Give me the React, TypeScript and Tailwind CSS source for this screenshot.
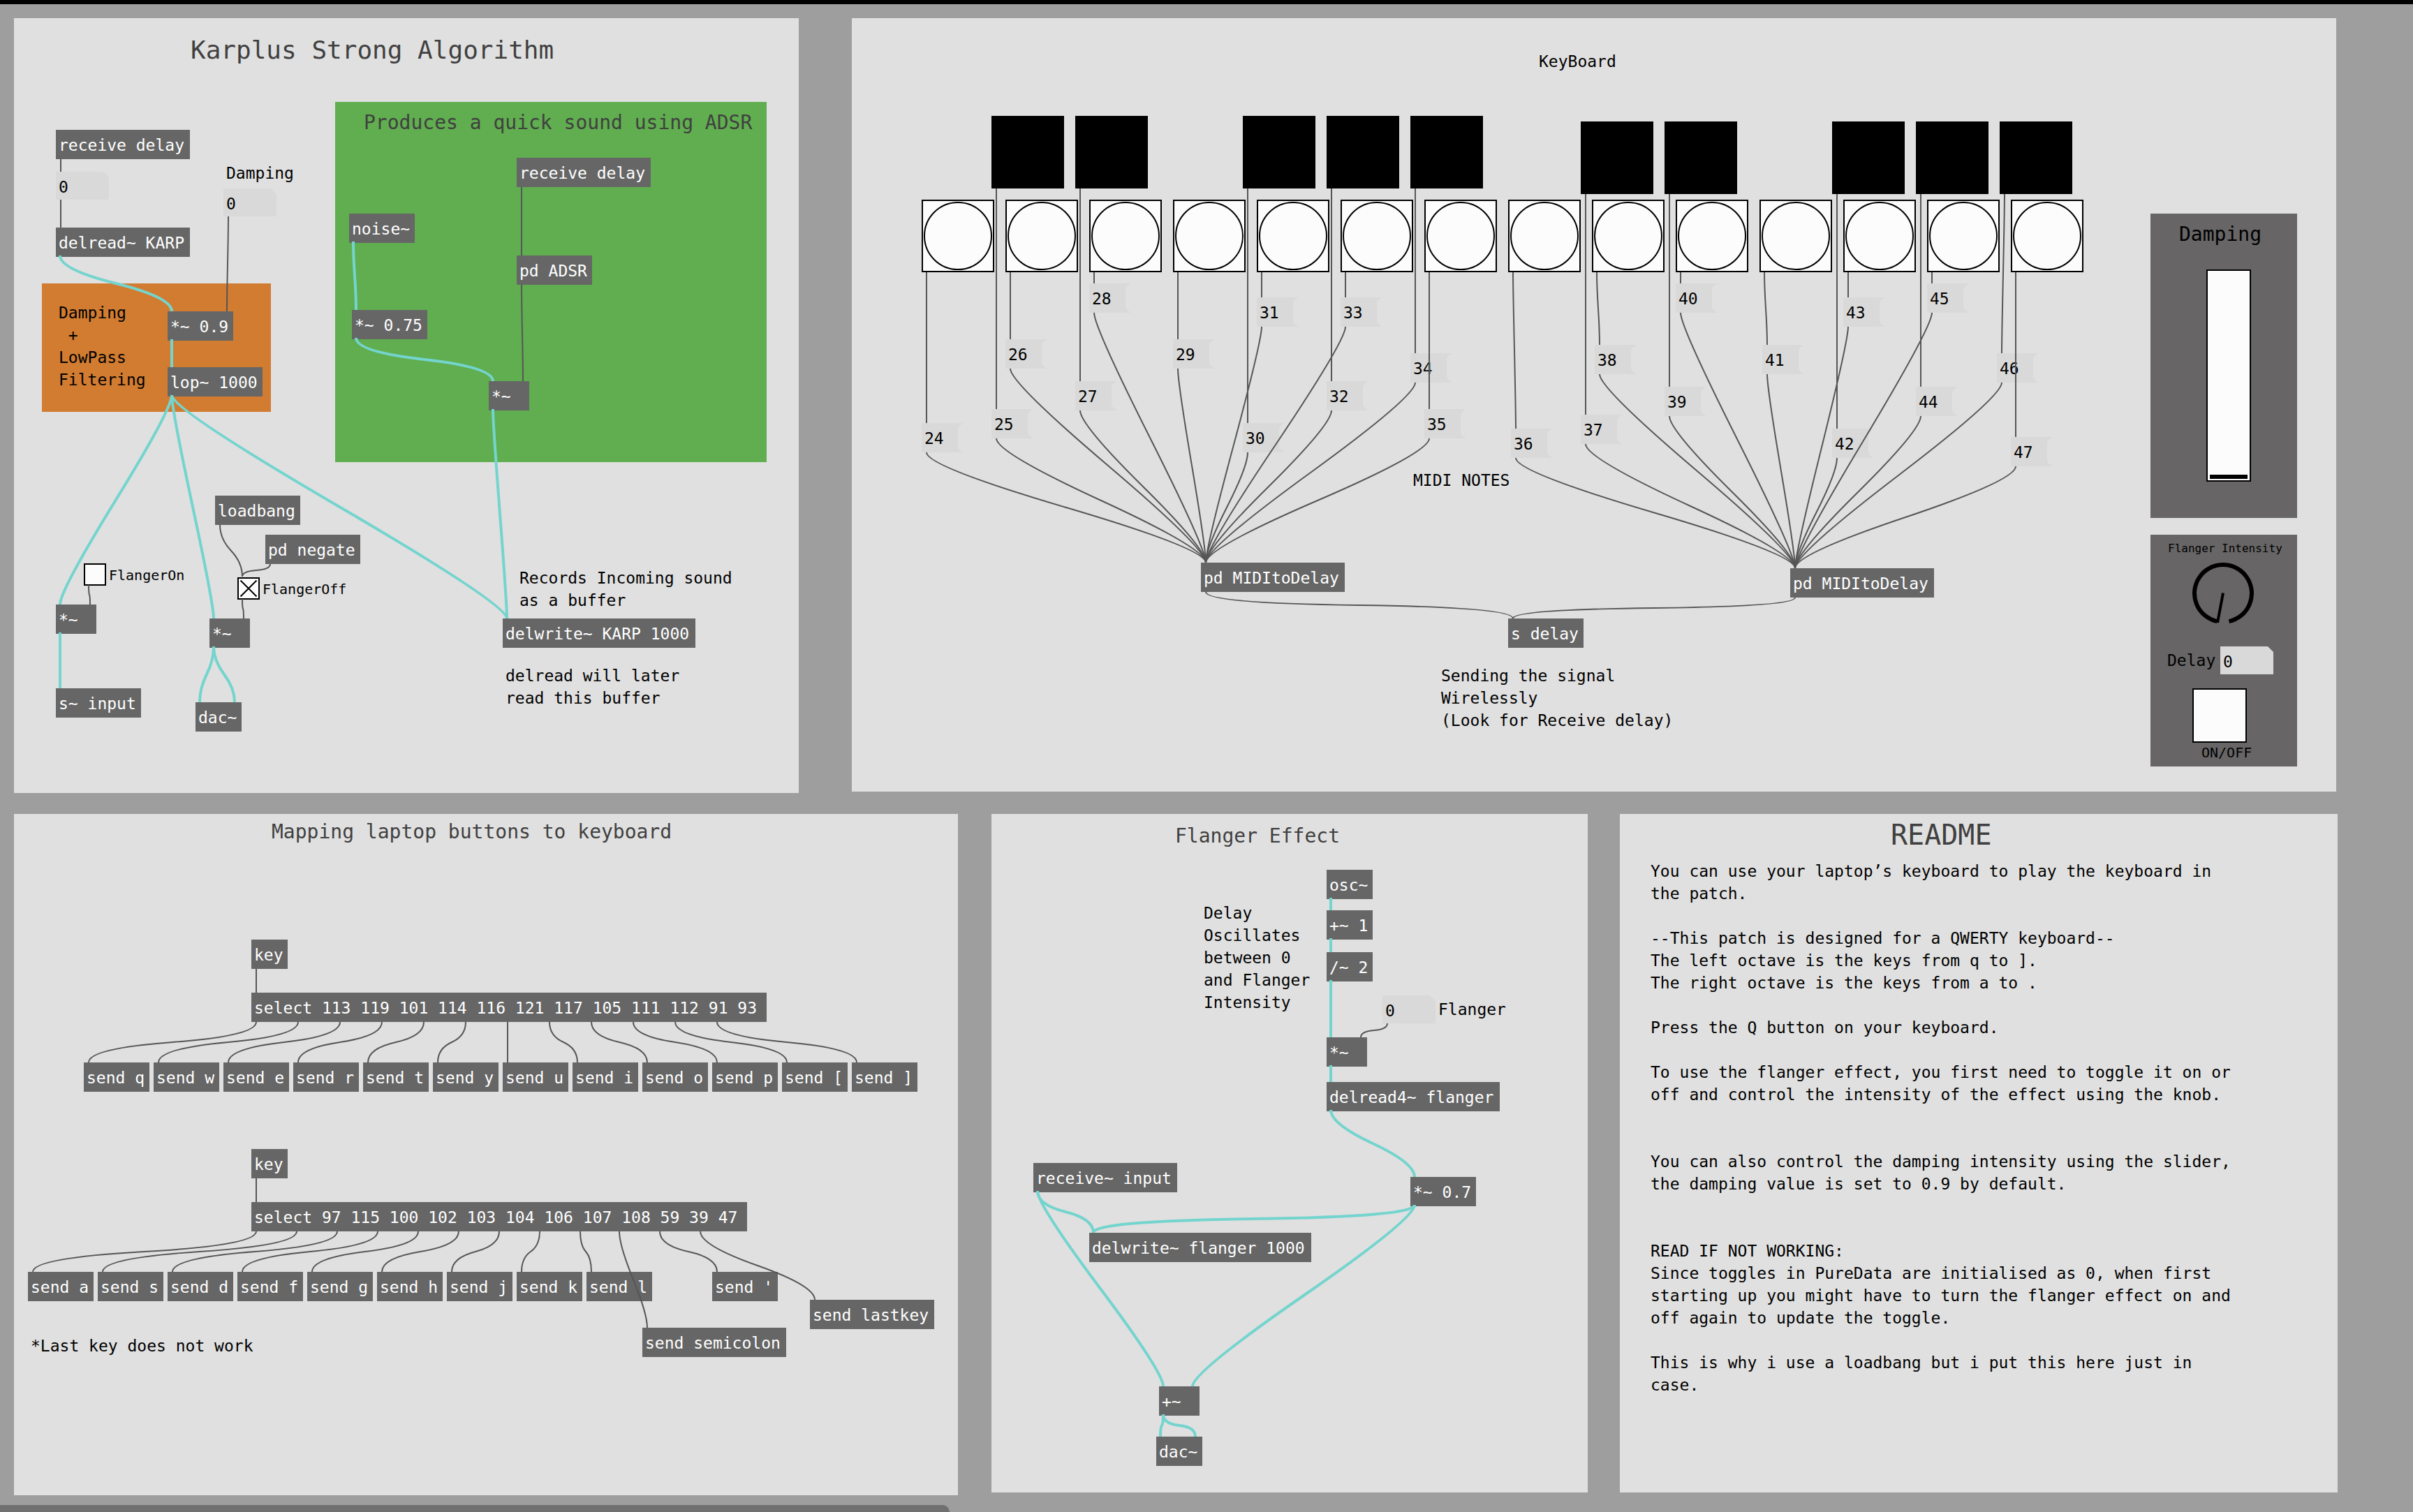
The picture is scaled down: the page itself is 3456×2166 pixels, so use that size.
import React from 'react';

type Point = { x: number; y: number };
type Wire = [x1: number, y1: number, x2: number, y2: number];
type Obj = [x: number, y: number, text: string, minWidth?: number];

/* Each patch canvas keeps the coordinates of the whole patch; the origin is its top left corner. */
const OriginContext = React.createContext<Point>({ x: 0, y: 0 });

function At({ x, y, children }: { x: number; y: number; children: React.ReactNode }) {
  const origin = React.useContext(OriginContext);
  return (
    <div className="absolute" style={{ left: x - origin.x, top: y - origin.y }}>
      {children}
    </div>
  );
}

/* Patch cord: two quadratic halves that leave and arrive vertically. */
function cordPath([x1, y1, x2, y2]: Wire) {
  if (x1 === x2) return `M${x1} ${y1}V${y2}`;
  const half = (y2 - y1) / 2;
  const lead = Math.min(20, half * 0.85);
  return `M${x1} ${y1}Q${x1} ${y1 + lead} ${(x1 + x2) / 2} ${y1 + half}Q${x2} ${y2 - lead} ${x2} ${y2}`;
}

function Wires({ control = [], signal = [] }: { control?: Wire[]; signal?: Wire[] }) {
  const origin = React.useContext(OriginContext);
  return (
    <svg className="pointer-events-none absolute inset-0 h-full w-full overflow-visible" fill="none" aria-hidden="true">
      <g transform={`translate(${-origin.x} ${-origin.y})`}>
        {control.map((w) => (
          <path key={w.join()} d={cordPath(w)} stroke="#565656" strokeWidth="2" />
        ))}
        {signal.map((w) => (
          <path key={w.join()} d={cordPath(w)} stroke="#74d4ce" strokeWidth="4" />
        ))}
      </g>
    </svg>
  );
}

function ObjectBox({ text, minWidth }: { text: string; minWidth?: number }) {
  return (
    <div
      className="bg-[#666666] pt-[6px] pb-1 pl-1 leading-8 whitespace-pre text-white"
      style={{ width: minWidth ?? text.length * 14 + 10 }}
    >
      {text}
    </div>
  );
}

function Objects({ items }: { items: Obj[] }) {
  return (
    <>
      {items.map(([x, y, text, minWidth]) => (
        <At key={`${x}-${y}`} x={x} y={y}>
          <ObjectBox text={text} minWidth={minWidth} />
        </At>
      ))}
    </>
  );
}

function SendRow({ keys }: { keys: string[] }) {
  return (
    <div className="flex gap-[6px]">
      {keys.map((key) => (
        <ObjectBox key={key} text={`send ${key}`} />
      ))}
    </div>
  );
}

function Comment({ x, y, children }: { x: number; y: number; children: React.ReactNode }) {
  return (
    <At x={x} y={y}>
      <p className="leading-8 whitespace-pre">{children}</p>
    </At>
  );
}

function NumberBox({ label, id }: { label: string; id?: string }) {
  return (
    <input
      id={id}
      aria-label={id ? undefined : label}
      defaultValue="0"
      inputMode="numeric"
      className="block h-10 w-[76px] bg-[#d9d9d9] pt-1 pl-1 leading-8 [clip-path:polygon(0_0,68px_0,100%_8px,100%_100%,0_100%)]"
    />
  );
}

function Toggle({ label, checked = false }: { label: string; checked?: boolean }) {
  return (
    <label className="flex items-center gap-1 text-xl leading-8">
      <span className="grid h-8 w-8">
        <input
          type="checkbox"
          defaultChecked={checked}
          className="peer col-start-1 row-start-1 block h-8 w-8 appearance-none border-2 border-black bg-[#fcfcfc]"
        />
        <svg
          className="pointer-events-none z-10 col-start-1 row-start-1 hidden h-8 w-8 peer-checked:block"
          viewBox="0 0 32 32"
          stroke="#000"
          strokeWidth="2"
        >
          <path d="M4.500 4.500L27.500 27.500M27.500 4.500L4.500 27.500" />
        </svg>
      </span>
      <span className="pt-0.5">{label}</span>
    </label>
  );
}

function BlackKeys({ count }: { count: number }) {
  return (
    <div className="flex gap-4">
      {Array.from({ length: count }, (_, i) => (
        <button key={i} type="button" aria-label={`Black key ${i + 1}`} className="h-[104px] w-[104px] bg-black" />
      ))}
    </div>
  );
}

function WhiteKeys() {
  return (
    <div className="flex gap-4">
      {Array.from({ length: 14 }, (_, i) => (
        <button
          key={i}
          type="button"
          aria-label={`White key ${i + 1}`}
          className="h-[104px] w-[104px] border-2 border-black bg-[#fcfcfc] p-px"
        >
          <span className="block h-full w-full rounded-full border-2 border-black" />
        </button>
      ))}
    </div>
  );
}

function Message({ note }: { note: number }) {
  return (
    <button
      type="button"
      className="block h-[42px] w-[60px] bg-[#d9d9d9] pt-px pl-1 text-left leading-8 [clip-path:polygon(0_0,100%_0,54px_4px,52px_8px,52px_34px,54px_38px,100%_100%,0_100%)]"
    >
      {note}
    </button>
  );
}

/* ---------- Karplus Strong ---------- */

const karplusObjects: Obj[] = [
  [80, 186, 'receive delay'],
  [80, 326, 'delread~ KARP'],
  [240, 446, '*~ 0.9'],
  [240, 526, 'lop~ 1000'],
  [740, 226, 'receive delay'],
  [740, 366, 'pd ADSR'],
  [500, 306, 'noise~'],
  [504, 444, '*~ 0.75'],
  [700, 546, '*~', 58],
  [308, 710, 'loadbang'],
  [380, 766, 'pd negate'],
  [80, 866, '*~', 58],
  [300, 886, '*~', 58],
  [80, 986, 's~ input'],
  [280, 1006, 'dac~'],
  [720, 886, 'delwrite~ KARP 1000'],
];

const karplusControl: Wire[] = [
  [87, 228, 87, 246],
  [87, 286, 87, 326],
  [327, 310, 325, 446],
  [747, 268, 747, 366],
  [747, 408, 749, 546],
  [315, 752, 347, 826],
  [387, 808, 347, 826],
  [127, 838, 129, 866],
  [347, 858, 349, 886],
];

const karplusSignal: Wire[] = [
  [86, 366, 246, 446],
  [246, 486, 246, 526],
  [246, 566, 86, 866],
  [246, 566, 306, 886],
  [246, 566, 726, 886],
  [86, 906, 86, 986],
  [306, 926, 286, 1006],
  [306, 926, 336, 1006],
  [506, 346, 510, 444],
  [510, 484, 706, 546],
  [706, 586, 726, 886],
];

function KarplusPanel() {
  return (
    <OriginContext.Provider value={{ x: 20, y: 26 }}>
      <section className="relative min-h-[1110px] grow-[1124] basis-0 bg-[#e0e0e0]">
        <h1 className="ml-[253px] pt-[22px] text-4xl leading-12 text-[#404040]">Karplus Strong Algorithm</h1>
        <At x={60} y={406}>
          <p className="h-[184px] w-[328px] bg-[#d17c31] pt-[26px] pl-6 leading-8 whitespace-pre">
            {'Damping\n +\nLowPass\nFiltering'}
          </p>
        </At>
        <At x={480} y={146}>
          <h2 className="h-[516px] w-[618px] bg-[#60ae4f] pt-3 pl-[41px] text-[28px] leading-9 text-[#404040]">
            Produces a quick sound using ADSR
          </h2>
        </At>
        <Objects items={karplusObjects} />
        <At x={80} y={246}>
          <NumberBox label="Delay value" />
        </At>
        <At x={320} y={270}>
          <NumberBox label="Damping" />
        </At>
        <Comment x={324} y={232}>Damping</Comment>
        <Comment x={744} y={812}>{'Records Incoming sound\nas a buffer'}</Comment>
        <Comment x={724} y={952}>{'delread will later\nread this buffer'}</Comment>
        <At x={120} y={806}>
          <Toggle label="FlangerOn" />
        </At>
        <At x={340} y={826}>
          <Toggle label="FlangerOff" checked />
        </At>
        <Wires control={karplusControl} signal={karplusSignal} />
      </section>
    </OriginContext.Provider>
  );
}

/* ---------- Keyboard ---------- */

/* note, message position, and the key that triggers it (left edge, bottom edge) */
const notes: [note: number, x: number, y: number, keyX: number, keyBottom: number][] = [
  [24, 1320, 606, 1320, 390],
  [25, 1420, 586, 1420, 270],
  [26, 1440, 486, 1440, 390],
  [27, 1540, 546, 1540, 270],
  [28, 1560, 406, 1560, 390],
  [29, 1680, 486, 1680, 390],
  [30, 1780, 606, 1780, 270],
  [31, 1800, 426, 1800, 390],
  [32, 1900, 546, 1900, 270],
  [33, 1920, 426, 1920, 390],
  [34, 2020, 506, 2020, 270],
  [35, 2040, 586, 2040, 390],
  [36, 2164, 614, 2160, 390],
  [37, 2264, 594, 2264, 278],
  [38, 2284, 494, 2280, 390],
  [39, 2384, 554, 2384, 278],
  [40, 2400, 406, 2400, 390],
  [41, 2524, 494, 2520, 390],
  [42, 2624, 614, 2624, 278],
  [43, 2640, 426, 2640, 390],
  [44, 2744, 554, 2744, 278],
  [45, 2760, 406, 2760, 390],
  [46, 2860, 506, 2864, 278],
  [47, 2880, 626, 2880, 390],
];

const keyboardWires: Wire[] = [
  ...notes.map(([, x, y, keyX, bottom]): Wire => [keyX + 7, bottom, x + 7, y]),
  ...notes.map(([note, x, y]): Wire => (note < 36 ? [x + 7, y + 42, 1727, 806] : [x + 7, y + 42, 2571, 814])),
  [1727, 848, 2167, 886],
  [2571, 856, 2167, 886],
];

function DampingPanel() {
  return (
    <div className="flex h-[436px] w-[210px] flex-col bg-[#676566] pt-3">
      <label htmlFor="damping" className="pl-[41px] text-[28px] leading-9">
        Damping
      </label>
      <div className="mt-8 ml-20 h-[304px] w-16 border-2 border-black bg-[#fcfcfc] px-[3px] py-0.5">
        <input
          id="damping"
          type="range"
          min="0"
          max="100"
          defaultValue="0"
          className="block h-full w-full appearance-none bg-transparent [direction:rtl] [writing-mode:vertical-lr] [&::-webkit-slider-thumb]:h-[6px] [&::-webkit-slider-thumb]:w-[54px] [&::-webkit-slider-thumb]:appearance-none [&::-webkit-slider-thumb]:bg-black"
        />
      </div>
    </div>
  );
}

function FlangerControls() {
  return (
    <div className="flex h-[332px] w-[210px] flex-col bg-[#676566] pt-2">
      <label className="block">
        <span className="block pl-[25px] text-base leading-6 whitespace-pre">Flanger Intensity</span>
        <input type="range" min="0" max="100" defaultValue="0" className="sr-only" />
        <svg className="mt-2 ml-[60px] h-[88px] w-[88px]" viewBox="0 0 88 88" fill="none" stroke="#000" aria-hidden="true">
          <path d="M35.500 84.100A41 41 0 1 1 52.500 84.100" strokeWidth="6" />
          <path d="M44 43.500L36 86" strokeWidth="4" />
        </svg>
      </label>
      <div className="mt-8 flex pl-6">
        <label htmlFor="delay" className="w-[76px] pt-1 leading-8">
          Delay
        </label>
        <NumberBox id="delay" label="Delay" />
      </div>
      <label className="mt-5 flex flex-col pl-[60px] text-xl leading-6">
        <input type="checkbox" className="h-[78px] w-[78px] appearance-none border-2 border-black bg-[#fcfcfc]" />
        <span className="mt-0.5 pl-[13px]">ON/OFF</span>
      </label>
    </div>
  );
}

function KeyboardPanel() {
  return (
    <OriginContext.Provider value={{ x: 1220, y: 26 }}>
      <section className="relative flex min-h-[1108px] grow-[2126] basis-0 justify-between bg-[#e0e0e0]">
        <h2 className="ml-[984px] pt-[46px] leading-8">KeyBoard</h2>
        <aside className="flex flex-col gap-6 pt-[280px] pr-14">
          <DampingPanel />
          <FlangerControls />
        </aside>
        <At x={1420} y={166}>
          <BlackKeys count={2} />
        </At>
        <At x={1780} y={166}>
          <BlackKeys count={3} />
        </At>
        <At x={2264} y={174}>
          <BlackKeys count={2} />
        </At>
        <At x={2624} y={174}>
          <BlackKeys count={3} />
        </At>
        <At x={1320} y={286}>
          <WhiteKeys />
        </At>
        {notes.map(([note, x, y]) => (
          <At key={note} x={x} y={y}>
            <Message note={note} />
          </At>
        ))}
        <Objects
          items={[
            [1720, 806, 'pd MIDItoDelay'],
            [2564, 814, 'pd MIDItoDelay'],
            [2160, 886, 's delay'],
          ]}
        />
        <Comment x={2024} y={672}>MIDI NOTES</Comment>
        <Comment x={2064} y={952}>{'Sending the signal\nWirelessly\n(Look for Receive delay)'}</Comment>
        <Wires control={keyboardWires} />
      </section>
    </OriginContext.Provider>
  );
}

/* ---------- Key mapping ---------- */

const upperKeys = ['q', 'w', 'e', 'r', 't', 'y', 'u', 'i', 'o', 'p', '[', ']'];
const lowerKeys = ['a', 's', 'd', 'f', 'g', 'h', 'j', 'k', 'l'];

const mappingObjects: Obj[] = [
  [360, 1346, 'key'],
  [360, 1422, 'select 113 119 101 114 116 121 117 105 111 112 91 93'],
  [360, 1646, 'key'],
  [360, 1722, 'select 97 115 100 102 103 104 106 107 108 59 39 47'],
  [1020, 1822, "send '"],
  [1160, 1862, 'send lastkey'],
  [920, 1902, 'send semicolon'],
];

const mappingWires: Wire[] = [
  [367, 1388, 367, 1422],
  ...upperKeys.map((_, i): Wire => [367 + 60 * i, 1464, 127 + 100 * i, 1522]),
  [367, 1688, 367, 1722],
  ...lowerKeys.map((_, i): Wire => [367 + 58 * i, 1764, 47 + 100 * i, 1822]),
  [887, 1764, 927, 1902],
  [945, 1764, 1027, 1822],
  [1003, 1764, 1167, 1862],
];

function MappingPanel() {
  return (
    <OriginContext.Provider value={{ x: 20, y: 1166 }}>
      <section className="relative mr-12 min-h-[976px] grow-[1352] basis-0 bg-[#e0e0e0]">
        <h2 className="ml-[369px] pt-2 text-[28px] leading-9 text-[#404040]">Mapping laptop buttons to keyboard</h2>
        <Objects items={mappingObjects} />
        <At x={120} y={1522}>
          <SendRow keys={upperKeys} />
        </At>
        <At x={40} y={1822}>
          <SendRow keys={lowerKeys} />
        </At>
        <Comment x={44} y={1912}>*Last key does not work</Comment>
        <Wires control={mappingWires} />
      </section>
    </OriginContext.Provider>
  );
}

/* ---------- Flanger ---------- */

const flangerObjects: Obj[] = [
  [1900, 1246, 'osc~'],
  [1900, 1304, '+~ 1'],
  [1900, 1364, '/~ 2'],
  [1900, 1486, '*~', 58],
  [1900, 1550, 'delread4~ flanger'],
  [1480, 1666, 'receive~ input'],
  [2020, 1686, '*~ 0.7'],
  [1560, 1766, 'delwrite~ flanger 1000'],
  [1660, 1986, '+~', 58],
  [1656, 2058, 'dac~'],
];

const flangerSignal: Wire[] = [
  [1906, 1286, 1906, 1304],
  [1906, 1344, 1906, 1364],
  [1906, 1404, 1906, 1486],
  [1906, 1526, 1906, 1550],
  [1906, 1590, 2026, 1686],
  [2026, 1726, 1566, 1766],
  [2026, 1726, 1708, 1986],
  [1486, 1706, 1566, 1766],
  [1486, 1706, 1666, 1986],
  [1666, 2026, 1662, 2058],
  [1666, 2026, 1712, 2058],
];

function FlangerPanel() {
  return (
    <OriginContext.Provider value={{ x: 1420, y: 1166 }}>
      <section className="relative mr-[46px] min-h-[972px] grow-[854] basis-0 bg-[#e0e0e0]">
        <h2 className="ml-[263px] pt-[14px] text-[28px] leading-9 text-[#404040]">Flanger Effect</h2>
        <Objects items={flangerObjects} />
        <At x={1980} y={1426}>
          <NumberBox label="Flanger" />
        </At>
        <Comment x={2060} y={1430}>Flanger</Comment>
        <Comment x={1724} y={1292}>{'Delay\nOscillates\nbetween 0\nand Flanger\nIntensity'}</Comment>
        <Wires control={[[1987, 1466, 1949, 1486]]} signal={flangerSignal} />
      </section>
    </OriginContext.Provider>
  );
}

/* ---------- Readme ---------- */

const readme = `You can use your laptop’s keyboard to play the keyboard in
the patch.

--This patch is designed for a QWERTY keyboard--
The left octave is the keys from q to ].
The right octave is the keys from a to .

Press the Q button on your keyboard.

To use the flanger effect, you first need to toggle it on or
off and control the intensity of the effect using the knob.


You can also control the damping intensity using the slider,
the damping value is set to 0.9 by default.


READ IF NOT WORKING:
Since toggles in PureData are initialised as 0, when first
starting up you might have to turn the flanger effect on and
off again to update the toggle.

This is why i use a loadbang but i put this here just in
case.`;

function ReadmePanel() {
  return (
    <section className="min-h-[972px] min-w-0 grow-[1028] basis-0 bg-[#e0e0e0]">
      <div className="flex flex-col gap-3 pt-[6px] pl-11">
        <h2 className="ml-[344px] text-[40px] leading-12 text-[#404040]">README</h2>
        <p className="leading-8 whitespace-pre">{readme}</p>
      </div>
    </section>
  );
}

export default function App() {
  return (
    <div className="flex min-h-screen flex-col bg-[#9e9e9e] font-['DejaVu_Sans_Mono','Liberation_Mono',monospace] text-[23px] text-black">
      <div className="h-1.5 bg-black" />
      <main className="flex flex-col gap-[30px] pt-5 pl-5">
        <div className="flex items-start gap-[76px] pr-[110px]">
          <KarplusPanel />
          <KeyboardPanel />
        </div>
        <div className="flex items-start pr-[108px]">
          <MappingPanel />
          <FlangerPanel />
          <ReadmePanel />
        </div>
      </main>
      <div className="mt-auto h-2.5 w-[39.35%] rounded-tr-[10px] bg-[#707070]" />
    </div>
  );
}
